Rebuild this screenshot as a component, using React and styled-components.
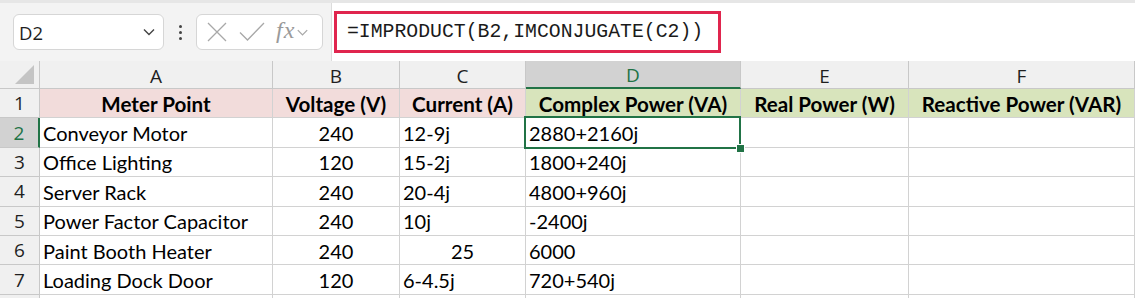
import styled, { createGlobalStyle } from "styled-components";

const GlobalStyle = createGlobalStyle`
  body {
    margin: 0;
    background: #ffffff;
    font-family: "Lato", "Liberation Sans", sans-serif;
  }
`;

const Page = styled.div`
  width: 1135px;
  height: 298px;
  overflow: hidden;
  background: #ffffff;
`;

const Toolbar = styled.div`
  height: 61px;
  display: flex;
  align-items: center;
  background: #f3f3f3;
  border-top: 3px solid #e6e6e6;
  box-sizing: border-box;
  padding-left: 13px;
`;

const NameBox = styled.div`
  width: 151px;
  height: 36px;
  box-sizing: border-box;
  background: #ffffff;
  border: 1px solid #d6d6d6;
  border-radius: 6px;
  display: flex;
  align-items: center;
  justify-content: space-between;
  padding: 0 6px 0 5px;
  font-family: "Open Sans", "Liberation Sans", sans-serif;
  font-size: 18.5px;
  color: #1f1f1f;
`;

const Dots = styled.div`
  width: 32px;
  display: flex;
  flex-direction: column;
  align-items: center;
  gap: 3px;
  span {
    width: 3px;
    height: 3px;
    border-radius: 50%;
    background: #444;
  }
`;

const FuncBox = styled.div`
  width: 127px;
  height: 36px;
  box-sizing: border-box;
  background: #ffffff;
  border: 1px solid #d6d6d6;
  border-radius: 6px;
  display: flex;
  align-items: center;
  padding: 0 2px 0 9px;
  gap: 11px;
`;

const FxGroup = styled.span`
  display: flex;
  align-items: center;
`;

const Fx = styled.span`
  font-family: "Liberation Serif", serif;
  font-style: italic;
  font-size: 24px;
  color: #9a9a9a;
  letter-spacing: 1px;
  margin-top: -3px;
`;

const FormulaArea = styled.div`
  flex: 1;
  align-self: stretch;
  margin-left: 8px;
  background: #ffffff;
  border-left: 1px solid #dcdcdc;
  display: flex;
  align-items: center;
  padding-left: 2px;
`;

const FormulaBox = styled.div`
  width: 387px;
  height: 42px;
  box-sizing: border-box;
  border: 3px solid #e0254e;
  display: flex;
  align-items: center;
  padding-left: 10px;
  font-family: "Liberation Mono", "DejaVu Sans Mono", monospace;
  font-size: 19.8px;
  color: #1a1a1a;
`;

const Grid = styled.div`
  display: grid;
  grid-template-columns: 40px 233px 127px 126px 215px 168px 226px;
  grid-template-rows: 28px repeat(8, 29.4px);
`;

const Cell = styled.div`
  position: relative;
  box-sizing: border-box;
  border-right: 1px solid #d2d2d2;
  border-bottom: 1px solid #d2d2d2;
  display: flex;
  align-items: center;
  justify-content: ${p => (p.$align === "center" ? "center" : "flex-start")};
  padding: 1px 3px 0;
  font-family: "Lato", "Liberation Sans", sans-serif;
  font-size: ${p => (p.$bold ? "20.6px" : "20px")};
  font-weight: ${p => (p.$bold ? 700 : 400)};
  background: ${p => p.$fill || "#ffffff"};
  color: #000000;
  white-space: nowrap;
`;

const ColHead = styled.div`
  box-sizing: border-box;
  background: ${p => (p.$active ? "#d2d2d2" : "#f0f0f0")};
  color: ${p => (p.$active ? "#217346" : "#1f1f1f")};
  border-right: 1px solid #c8c8c8;
  border-bottom: ${p => (p.$active ? "2px solid #217346" : "1px solid #c8c8c8")};
  display: flex;
  align-items: center;
  justify-content: center;
  font-family: "Open Sans", "Liberation Sans", sans-serif;
  font-size: 19px;
  padding-top: 2px;
`;

const RowHead = styled.div`
  box-sizing: border-box;
  background: ${p => (p.$active ? "#d2d2d2" : "#f0f0f0")};
  color: ${p => (p.$active ? "#217346" : "#1f1f1f")};
  border-right: ${p => (p.$active ? "2px solid #217346" : "1px solid #c8c8c8")};
  border-bottom: 1px solid #c8c8c8;
  display: flex;
  align-items: center;
  justify-content: center;
  font-family: "Open Sans", "Liberation Sans", sans-serif;
  font-size: 19px;
`;

const Corner = styled.div`
  box-sizing: border-box;
  background: #f0f0f0;
  border-right: 1px solid #c8c8c8;
  border-bottom: 1px solid #c8c8c8;
  display: flex;
  align-items: flex-end;
  justify-content: flex-end;
  padding: 0 5px 4px 0;
`;

const Selection = styled.div`
  position: absolute;
  z-index: 2;
  left: -2px;
  top: -2px;
  right: -1px;
  bottom: -2px;
  border: 2px solid #217346;
  pointer-events: none;
  &::after {
    content: "";
    position: absolute;
    right: -6px;
    bottom: -6px;
    width: 7px;
    height: 7px;
    background: #217346;
    border: 1px solid #ffffff;
  }
`;

const PINK = "#f2dcdb";
const GREEN = "#d8e4bc";

const headers = [
  { text: "Meter Point", fill: PINK },
  { text: "Voltage (V)", fill: PINK },
  { text: "Current (A)", fill: PINK },
  { text: "Complex Power (VA)", fill: GREEN },
  { text: "Real Power (W)", fill: GREEN },
  { text: "Reactive Power (VAR)", fill: GREEN },
];

const rows = [
  ["Conveyor Motor", "240", "12-9j", "2880+2160j"],
  ["Office Lighting", "120", "15-2j", "1800+240j"],
  ["Server Rack", "240", "20-4j", "4800+960j"],
  ["Power Factor Capacitor", "240", "10j", "-2400j"],
  ["Paint Booth Heater", "240", "25", "6000"],
  ["Loading Dock Door", "120", "6-4.5j", "720+540j"],
];

const Chevron = ({ color = "#444", size = 16 }) => (
  <svg width={size} height={size} viewBox="0 0 16 16" fill="none">
    <path d="M3 5.5l5 5L13 5.5" stroke={color} strokeWidth="1.4" />
  </svg>
);

export default function App() {
  return (
    <Page>
      <GlobalStyle />
      <Toolbar>
        <NameBox>
          D2
          <Chevron />
        </NameBox>
        <Dots>
          <span />
          <span />
          <span />
        </Dots>
        <FuncBox>
          <svg width="22" height="22" viewBox="0 0 22 22" fill="none">
            <path d="M2 2l18 18M20 2L2 20" stroke="#a8a8a8" strokeWidth="1.3" />
          </svg>
          <svg width="26" height="22" viewBox="0 0 26 22" fill="none">
            <path d="M1 11.5l7.5 7.5L25 2" stroke="#a8a8a8" strokeWidth="1.3" />
          </svg>
          <FxGroup>
            <Fx>fx</Fx>
            <Chevron color="#a8a8a8" size={15} />
          </FxGroup>
        </FuncBox>
        <FormulaArea>
          <FormulaBox>=IMPRODUCT(B2,IMCONJUGATE(C2))</FormulaBox>
        </FormulaArea>
      </Toolbar>
      <Grid>
        <Corner>
          <svg width="19" height="19" viewBox="0 0 19 19">
            <path d="M19 0V19H0Z" fill="#c4c4c4" />
          </svg>
        </Corner>
        {["A", "B", "C", "D", "E", "F"].map(l => (
          <ColHead key={l} $active={l === "D"}>{l}</ColHead>
        ))}
        <RowHead>1</RowHead>
        {headers.map(h => (
          <Cell key={h.text} $bold $align="center" $fill={h.fill}>{h.text}</Cell>
        ))}
        {rows.map((r, i) => (
          <>
            <RowHead key={`rh-${i}`} $active={i === 0}>{i + 2}</RowHead>
            <Cell key={`a-${i}`}>{r[0]}</Cell>
            <Cell key={`b-${i}`} $align="center">{r[1]}</Cell>
            <Cell key={`c-${i}`} $align={/j/.test(r[2]) ? "left" : "center"}>{r[2]}</Cell>
            <Cell key={`d-${i}`}>
              {r[3]}
              {i === 0 && <Selection />}
            </Cell>
            <Cell key={`e-${i}`} />
            <Cell key={`f-${i}`} />
          </>
        ))}
        <RowHead />
        {[0, 1, 2, 3, 4, 5].map(k => <Cell key={`g-${k}`} />)}
      </Grid>
    </Page>
  );
}
